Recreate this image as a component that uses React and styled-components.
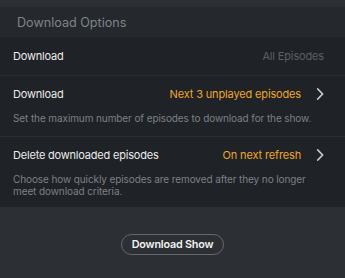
import React from 'react'
import styled, { createGlobalStyle } from 'styled-components';

const Global = createGlobalStyle`
    html, body {
        margin: 0;
        padding: 0;
        background: #2c2f33;
    }
    body {
        font-family: Inter, "Noto Sans", sans-serif;
        -webkit-font-smoothing: antialiased;
    }
`;

const Page = styled.div`
    width: 345px;
    height: 278px;
    background: #2c2f33;
    padding-top: 7px;
    box-sizing: border-box;
`;

const SectionHeader = styled.div`
    height: 30px;
    background: #25282c;
    color: #80848a;
    font-size: 12.6px;
    padding-left: 17px;
    display: flex;
    align-items: center;
    box-sizing: border-box;
`;

const List = styled.div`
    background: #1f2226;
`;

const Item = styled.div`
    border-top: ${props => props.first ? 'none' : '1px solid #2b2e32'};
    padding: ${props => props.pt || 12}px 21px ${props => props.pb || 12}px 13px;
`;

const Line = styled.div`
    display: flex;
    align-items: center;
    height: 14px;
`;

const Label = styled.div`
    flex: 1;
    color: #ebebeb;
    font-size: 11px;
    letter-spacing: -0.2px;
`;

const Value = styled.div`
    color: ${props => props.accent ? '#eea62c' : '#5c6065'};
    font-size: 11px;
    letter-spacing: -0.15px;
    margin-right: ${props => props.chevron ? '15px' : '0'};
`;

const Chevron = styled.svg`
    width: 8px;
    height: 12px;
`;

const Desc = styled.div`
    margin-top: 11px;
    color: #7d8187;
    font-size: 10px;
    letter-spacing: -0.1px;
    line-height: 12px;
    padding-right: 8px;
`;

const Footer = styled.div`
    display: flex;
    justify-content: center;
    padding-top: 27px;
`;

const Button = styled.button`
    width: 103px;
    height: 21px;
    border-radius: 11px;
    border: 1px solid #65686c;
    background: transparent;
    color: #f2f2f2;
    font-family: Inter, "Noto Sans", sans-serif;
    font-size: 10.8px;
    letter-spacing: -0.2px;
    font-weight: 600;
    padding: 0;
`;

function Arrow() {
    return (
        <Chevron viewBox="0 0 8 12">
            <path d="M1.8 1 L6.6 6 L1.8 11" fill="none" stroke="#c9cacc" strokeWidth="1.8" strokeLinecap="round" strokeLinejoin="round"/>
        </Chevron>
    );
}

export default function App() {
    return (
        <>
            <Global/>
            <Page>
                <SectionHeader>Download Options</SectionHeader>
                <List>
                    <Item first>
                        <Line>
                            <Label>Download</Label>
                            <Value>All Episodes</Value>
                        </Line>
                    </Item>
                    <Item pt={11} pb={12}>
                        <Line>
                            <Label>Download</Label>
                            <Value accent chevron>Next 3 unplayed episodes</Value>
                            <Arrow/>
                        </Line>
                        <Desc>Set the maximum number of episodes to download for the show.</Desc>
                    </Item>
                    <Item pt={11} pb={10}>
                        <Line>
                            <Label>Delete downloaded episodes</Label>
                            <Value accent chevron>On next refresh</Value>
                            <Arrow/>
                        </Line>
                        <Desc>Choose how quickly episodes are removed after they no longer meet download criteria.</Desc>
                    </Item>
                </List>
                <Footer>
                    <Button>Download Show</Button>
                </Footer>
            </Page>
        </>
    );
}
